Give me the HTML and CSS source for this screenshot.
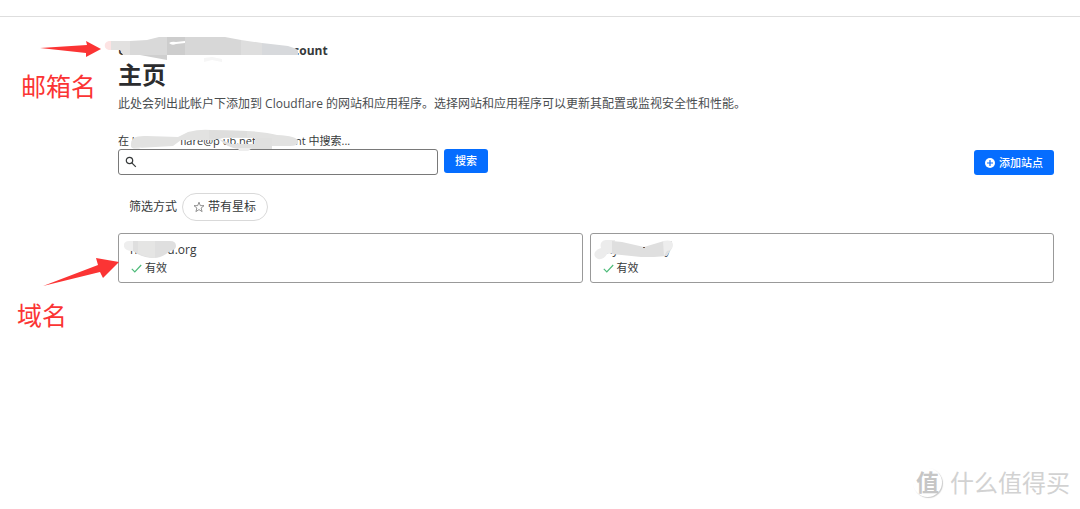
FILE: index.html
```html
<!DOCTYPE html>
<html lang="zh-CN">
<head>
<meta charset="utf-8">
<meta name="viewport" content="width=device-width, initial-scale=1">
<title>主页</title>
<link rel="stylesheet" href="styles.css">
</head>
<body>
<header class="topbar"></header>
<main class="page">
  <div class="account"><span>U</span><span class="account-end">count</span>
    <svg class="mask mask-account" width="200" height="32" viewBox="104 34 200 32" aria-hidden="true">
      <path d="M110 41h8v9h-8c-7 0-7-9 0-9z" fill="#fde3e3"/>
      <path d="M111 41h19v14h-7l-3-5h-9z" fill="#e2e1e0"/>
      <path d="M130 41l17-1 12-3h8v18h-37z" fill="#d9d9d9"/>
      <path d="M140 55h27v5z" fill="#cfcfcf"/>
      <path d="M167 37h18v18h-18z" fill="#cdcdcd"/>
      <path d="M185 37h40l16 3v15h-56z" fill="#d7d7d7"/>
      <path d="M241 40l21 3v12h-21z" fill="#dedede"/>
      <path d="M262 43l26 3q10 3 10 5v4h-36z" fill="#d7d9dc"/>
      <path d="M169 43q3-2 7-1l9-1v2l-9 1q-4 2-7-1z" fill="#fff"/>
      <path d="M204 58l8-1 10 2v3l-10-2-8 2z" fill="#f6f6f6"/>
    </svg>
  </div>
  <h1 class="title">主页</h1>
  <p class="intro">此处会列出此帐户下添加到 Cloudflare 的网站和应用程序。选择网站和应用程序可以更新其配置或监视安全性和性能。</p>
  <form class="search">
    <div class="field">
      <label class="field-label" for="q"><span>在 U</span><span class="address">flare@p</span><span class="host">ub.net</span><span class="label-end">nt 中搜索...</span></label>
      <svg class="mask mask-label" width="172" height="24" viewBox="130 128 172 24" aria-hidden="true">
        <path d="M131 144c0-8 8-8 16-8l31 1 10-5q12-3 23-2l36 1q20 1 30 4 20 1 21 6 1 5-8 5h-35v-8h-28l-9-1-3 3h-34l-8 6-35 2q-8 2-7-4z" fill="#e2e2e1"/>
        <path d="M209 130l38 1v6h-19l-9 2h-10z" fill="#dededd"/>
        <path d="M219 139l13 5h24v-6h16v11h-33q-12-1-20-10z" fill="#e0e0df"/>
        <path d="M133 148l9-1-3 2h-5zM238 148h14l-4 3h-9z" fill="#eee"/>
      </svg>
      <div class="input-wrap">
        <svg class="search-icon" width="12" height="12" viewBox="0 0 12 12" aria-hidden="true"><circle cx="4.5" cy="4.5" r="3.2"/><path d="M6.8 6.8l4 4"/></svg>
        <input class="input" id="q" type="text">
      </div>
    </div>
    <button class="btn btn-search" type="submit">搜索</button>
    <button class="btn btn-add" type="button">
      <svg width="10" height="10" viewBox="0 0 10 10" aria-hidden="true"><circle cx="5" cy="5" r="5" fill="#fff"/><path d="M5 2v6M2 5h6" stroke="#056dff" stroke-width="1.2"/></svg>
      添加站点
    </button>
  </form>
  <div class="filters">
    <span>筛选方式</span>
    <button class="pill" type="button">
      <svg width="12" height="12" viewBox="0 0 12 12" aria-hidden="true"><path d="M6 1.2l1.3 3.4 3.7.1-2.9 2.3 1 3.6L6 8.6l-3.1 2 1-3.6L1 4.7l3.7-.1z" fill="none" stroke="#777" stroke-width=".8"/></svg>
      带有星标
    </button>
  </div>
  <div class="sites">
    <a class="site" href="#">
      <span class="domain"><span>n</span><span class="domain-end">d.org</span></span>
      <span class="status"><svg width="11" height="9" viewBox="0 0 11 9" aria-hidden="true"><path d="M.8 4.8l3 3L10.2 1" fill="none" stroke="#4dbb79" stroke-width="1.2"/></svg>有效</span>
      <svg class="mask mask-site" width="54" height="20" viewBox="124 239 54 20" aria-hidden="true">
        <path d="M129 241h12v10h-10q-8-1-7-7 1-3 5-3z" fill="#eee"/>
        <path d="M133 241h37q6 0 6 5 0 4-6 5-8 7-16 7-12 0-21-7z" fill="#dfdfdf"/>
        <path d="M138 241h17v17q-11-1-17-5z" fill="#e5e5e4"/>
      </svg>
    </a>
    <a class="site" href="#">
      <span class="domain"><span>my</span><span class="second-end">y</span></span>
      <span class="status"><svg width="11" height="9" viewBox="0 0 11 9" aria-hidden="true"><path d="M.8 4.8l3 3L10.2 1" fill="none" stroke="#4dbb79" stroke-width="1.2"/></svg>有效</span>
      <svg class="mask mask-second" width="82" height="24" viewBox="592 238 82 24" aria-hidden="true">
        <path d="M605 240h9v13l-8 1q-3 6-9 5-5-2-3-7 2-3 6-4-2-7 5-8z" fill="#ececec"/>
        <path d="M611 241l10 1 22 5 20-6h8v7l-5 8-13 1h-13l-29-3z" fill="#dfdfdf"/>
        <path d="M662 241q10-2 10 4 0 5-6 6l-3 5z" fill="#ededed"/>
        <path d="M642 247h2v1h-2z" fill="#6c5548"/>
      </svg>
    </a>
  </div>
</main>

<div class="note note-mail">邮箱名</div>
<div class="note note-domain">域名</div>
<svg class="arrows" width="122" height="290" viewBox="0 0 122 290" aria-hidden="true">
  <path d="M40 48l47-3-1-4 15 8-15 8v-4z" fill="#fb3434"/>
  <path d="M43 286l55-21-2-7 23 4-16 16-3-6z" fill="#fb3434"/>
</svg>
<div class="watermark"><span class="seal">值</span><span>什么值得买</span></div>
</body>
</html>
```

FILE: styles.css
```css
* { box-sizing: border-box; }
body {
  margin: 0;
  min-height: 100vh;
  position: relative;
  background: #fff;
  color: #36393a;
  font: 12px/18px "Open Sans", "Noto Sans CJK SC", sans-serif;
}
button, input { font: inherit; color: inherit; }
.topbar { height: 17px; border-bottom: 1px solid #dedede; }
.page { padding: 25px 26px 0 118px; }
.mask { position: absolute; display: block; }
.account { position: relative; display: flex; font-weight: 700; }
.account-end { margin-left: 166px; }
.mask-account { left: -14px; top: -8px; }
.title { margin: 0; font-size: 24px; line-height: 30px; font-weight: 700; color: #2c2c2e; }
.intro { margin: 5px 0 0; color: #4a4d4f; }
.search { display: flex; align-items: flex-end; gap: 6px; margin: 20px 0 0; }
.field { position: relative; flex: 0 1 320px; }
.field-label { display: flex; font-size: 11px; line-height: 16px; white-space: pre; }
.address { margin-left: 40px; }
.host { margin-left: 3px; }
.label-end { margin-left: 39px; }
.mask-label { left: 12px; top: -5px; }
.input-wrap {
  display: flex;
  align-items: center;
  height: 26px;
  padding-left: 6px;
  border: 1px solid #797979;
  border-radius: 3px;
}
.search-icon { flex: none; fill: none; stroke: #36393a; stroke-width: 1.2; }
.input { flex: 1; min-width: 0; border: 0; outline: 0; padding: 0 6px; background: none; }
.btn {
  display: flex;
  align-items: center;
  justify-content: center;
  gap: 4px;
  border: 0;
  border-radius: 3px;
  background: #056dff;
  color: #fff;
  font-size: 11px;
  line-height: 16px;
  font-weight: 500;
  white-space: nowrap;
}
.btn-search { padding: 4px 11px; margin-bottom: 2px; }
.btn-add { padding: 5px 11px 4px; margin-left: auto; }
.filters { display: flex; align-items: center; gap: 5px; margin-top: 18px; padding-left: 11px; }
.pill {
  display: flex;
  align-items: center;
  gap: 3px;
  padding: 4px 11px 4px 10px;
  border: 1px solid #d9d9d9;
  border-radius: 14px;
  background: #fff;
}
.sites { display: grid; grid-template-columns: 1fr 1fr; gap: 7px; margin-top: 12px; }
.site {
  position: relative;
  display: block;
  padding: 7px 11px 5px;
  border: 1px solid #999;
  border-radius: 3px;
  color: inherit;
  text-decoration: none;
}
.domain { display: flex; }
.domain-end { margin-left: 30px; }
.second-end { margin-left: 46px; }
.status { display: flex; align-items: center; gap: 3px; padding-left: 1px; font-size: 11px; }
.mask-site { left: 5px; top: 5px; }
.mask-second { left: 2px; top: 4px; }
.note {
  position: absolute;
  color: #fb3434;
  font-family: "Noto Sans CJK SC", sans-serif;
  font-size: 25px;
  line-height: 32px;
}
.note-mail { left: 21px; top: 69px; }
.note-domain { left: 17px; top: 298px; }
.arrows { position: absolute; left: 0; top: 0; pointer-events: none; }
.watermark {
  position: absolute;
  right: 10px;
  bottom: 11px;
  display: flex;
  align-items: center;
  gap: 8px;
  color: #d2d2d2;
  font-family: "Noto Sans CJK SC", sans-serif;
  font-size: 24px;
  line-height: 32px;
}
.seal {
  width: 29px;
  height: 29px;
  border-radius: 50%;
  box-shadow: 1px 1px 1px #ccc;
  color: #c6c6c6;
  font-size: 23px;
  line-height: 27px;
  font-weight: 700;
  text-align: center;
}
```
